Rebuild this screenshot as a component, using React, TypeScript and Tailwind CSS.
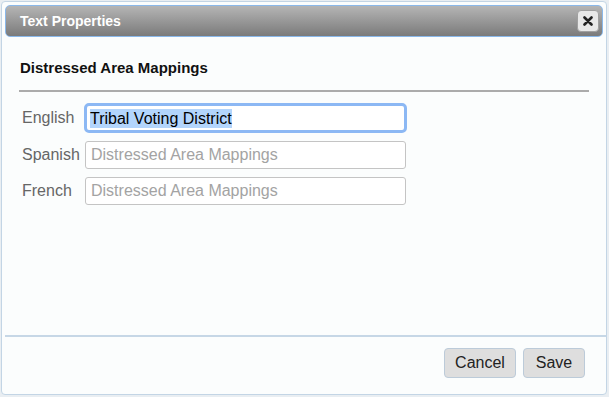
export default function App() {
  const font = { fontFamily: '"Liberation Sans", Arial, sans-serif' };
  return (
    <div className="w-[609px] h-[397px] bg-[#e9eef2] p-[1px] pr-[2px] pb-[2px]" style={font}>
      <div className="w-full h-full bg-[#fbfdfd] border border-[#c3d5e5] rounded-[4px] flex flex-col">
        <div className="mx-[3px] mt-[3px] h-[32px] rounded-[5px] border border-[#8ab8ea] bg-gradient-to-b from-[#b5b5b5] to-[#7b7b7b] flex items-center justify-between pl-[14px] pr-[3px]">
          <span className="text-white font-bold text-[14px]">Text Properties</span>
          <div className="w-[22px] h-[22px] rounded-[4px] bg-[#e8e8e8] border border-[#a0a0a0] flex items-center justify-center">
            <svg width="10" height="10" viewBox="0 0 10 10">
              <path d="M1.5 1.5 L8.5 8.5 M8.5 1.5 L1.5 8.5" stroke="#222" strokeWidth="2.6" strokeLinecap="round" />
            </svg>
          </div>
        </div>
        <div className="pl-[17px] pr-[17px] flex-1 flex flex-col">
          <div className="pt-[21px] pl-[1px] font-bold text-[15px] text-[#111] leading-[20px]">Distressed Area Mappings</div>
          <div className="mt-[12px] h-[2px] bg-[#ababab]" />
          <div className="mt-[11px] flex flex-col">
            <div className="flex items-center h-[30px]">
              <span className="w-[65px] pl-[3px] text-[16px] text-[#666]">English</span>
              <div className="w-[323px] h-[30px] rounded-[5px] border-[3px] border-[#8cb8f4] bg-white flex items-center pl-[3px]">
                <span className="text-[16px] text-black bg-[#b3d5fc] leading-[19px]">Tribal Voting District</span>
              </div>
            </div>
            <div className="flex items-center h-[28px] mt-[8px]">
              <span className="w-[66px] pl-[3px] text-[16px] text-[#666]">Spanish</span>
              <div className="w-[321px] h-[28px] rounded-[3px] border border-[#c4c4c4] bg-white flex items-center pl-[5px]">
                <span className="text-[16px] text-[#a3a3a3]">Distressed Area Mappings</span>
              </div>
            </div>
            <div className="flex items-center h-[28px] mt-[8px]">
              <span className="w-[66px] pl-[3px] text-[16px] text-[#666]">French</span>
              <div className="w-[321px] h-[28px] rounded-[3px] border border-[#c4c4c4] bg-white flex items-center pl-[5px]">
                <span className="text-[16px] text-[#a3a3a3]">Distressed Area Mappings</span>
              </div>
            </div>
          </div>
        </div>
        <div className="h-[2px] bg-[#c6d7e6] ml-[3px]" />
        <div className="h-[57px] flex items-start justify-end pt-[11px] pr-[21px] gap-[7px]">
          <button className="w-[72px] h-[30px] rounded-[4px] bg-[#dedede] border border-[#bccbd9] text-[16px] text-[#222]">Cancel</button>
          <button className="w-[62px] h-[30px] rounded-[4px] bg-[#dedede] border border-[#bccbd9] text-[16px] text-[#222]">Save</button>
        </div>
      </div>
    </div>
  );
}
